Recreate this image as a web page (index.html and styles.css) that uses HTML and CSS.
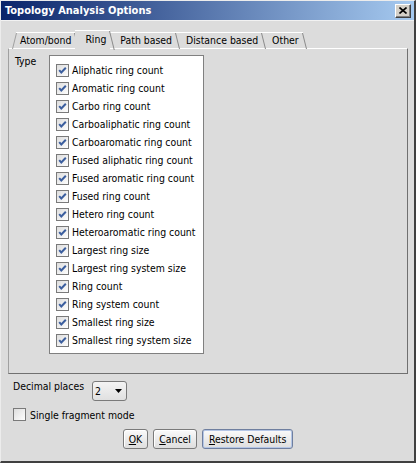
FILE: index.html
```html
<!DOCTYPE html>
<html>
<head>
<meta charset="utf-8">
<link rel="stylesheet" href="styles.css">
</head>
<body>
<svg class="defs" width="0" height="0">
  <defs>
    <linearGradient id="cbg" x1="0" y1="0" x2="1" y2="1">
      <stop offset="0" stop-color="#dcdcdc"/>
      <stop offset="1" stop-color="#ffffff"/>
    </linearGradient>
    <symbol id="cbox" viewBox="0 0 13 13">
      <rect x="0.5" y="0.5" width="12" height="12" fill="url(#cbg)" stroke="#7a7a7a"/>
    </symbol>
    <symbol id="ccheck" viewBox="0 0 13 13">
      <rect x="0.5" y="0.5" width="12" height="12" fill="url(#cbg)" stroke="#7a7a7a"/>
      <path d="M3.2 6.2 L5.3 8.5 L9.8 3.8" fill="none" stroke="#3b5e9e" stroke-width="2"/>
    </symbol>
  </defs>
</svg>
<div class="window">
  <div class="titlebar">
    <span class="title">Topology Analysis Options</span>
    <span class="close">
      <svg width="8" height="7" viewBox="0 0 8 7"><path d="M0.5 0.5 L7.5 6.5 M7.5 0.5 L0.5 6.5" stroke="#000" stroke-width="1.6"/></svg>
    </span>
  </div>
  <div class="content">
    <div class="tabs">
      <div class="tab first">Atom/bond</div>
      <div class="tab selected">Ring</div>
      <div class="tab">Path based</div>
      <div class="tab">Distance based</div>
      <div class="tab">Other</div>
    </div>
    <div class="panel">
      <div class="type-label">Type</div>
      <div class="list">
        <div class="item"><svg class="cb"><use href="#ccheck"/></svg><span>Aliphatic ring count</span></div>
        <div class="item"><svg class="cb"><use href="#ccheck"/></svg><span>Aromatic ring count</span></div>
        <div class="item"><svg class="cb"><use href="#ccheck"/></svg><span>Carbo ring count</span></div>
        <div class="item"><svg class="cb"><use href="#ccheck"/></svg><span>Carboaliphatic ring count</span></div>
        <div class="item"><svg class="cb"><use href="#ccheck"/></svg><span>Carboaromatic ring count</span></div>
        <div class="item"><svg class="cb"><use href="#ccheck"/></svg><span>Fused aliphatic ring count</span></div>
        <div class="item"><svg class="cb"><use href="#ccheck"/></svg><span>Fused aromatic ring count</span></div>
        <div class="item"><svg class="cb"><use href="#ccheck"/></svg><span>Fused ring count</span></div>
        <div class="item"><svg class="cb"><use href="#ccheck"/></svg><span>Hetero ring count</span></div>
        <div class="item"><svg class="cb"><use href="#ccheck"/></svg><span>Heteroaromatic ring count</span></div>
        <div class="item"><svg class="cb"><use href="#ccheck"/></svg><span>Largest ring size</span></div>
        <div class="item"><svg class="cb"><use href="#ccheck"/></svg><span>Largest ring system size</span></div>
        <div class="item"><svg class="cb"><use href="#ccheck"/></svg><span>Ring count</span></div>
        <div class="item"><svg class="cb"><use href="#ccheck"/></svg><span>Ring system count</span></div>
        <div class="item"><svg class="cb"><use href="#ccheck"/></svg><span>Smallest ring size</span></div>
        <div class="item"><svg class="cb"><use href="#ccheck"/></svg><span>Smallest ring system size</span></div>
      </div>
    </div>
    <div class="decimal">
      <span class="decimal-label">Decimal places</span>
      <div class="combo">
        <span class="combo-value">2</span>
        <svg class="combo-arrow" width="7" height="4" viewBox="0 0 7 4"><path d="M0 0 H7 L3.5 4 Z" fill="#000"/></svg>
      </div>
    </div>
    <div class="fragment">
      <svg class="cb"><use href="#cbox"/></svg>
      <span>Single fragment mode</span>
    </div>
    <div class="buttons">
      <button class="btn"><u>O</u>K</button>
      <button class="btn"><u>C</u>ancel</button>
      <button class="btn default"><u>R</u>estore Defaults</button>
    </div>
  </div>
</div>
</body>
</html>
```
FILE: styles.css
```css
body {
  margin: 0;
  font-family: "DejaVu Sans Condensed", "DejaVu Sans", sans-serif;
  font-stretch: condensed;
  font-size: 10.4px;
  color: #000;
}
.defs {
  position: absolute;
  width: 0;
  height: 0;
}
.window {
  width: 416px;
  height: 463px;
  box-sizing: border-box;
  background: #dcdcdc;
  border-style: solid;
  border-width: 1px 2px 2px 1px;
  border-color: #ececec #404040 #404040 #ececec;
  display: flex;
  flex-direction: column;
}
.titlebar {
  height: 19px;
  flex: none;
  display: flex;
  align-items: center;
  justify-content: space-between;
  padding: 0 3px 0 4px;
  background: linear-gradient(to right, #0a246a, #a6caf0);
  color: #fff;
  font-weight: bold;
  font-size: 11px;
}
.close {
  width: 16px;
  height: 14px;
  box-sizing: border-box;
  background: #d4d0c8;
  border-style: solid;
  border-width: 1px;
  border-color: #fff #404040 #404040 #fff;
  box-shadow: inset -1px -1px 0 #808080;
  display: flex;
  align-items: center;
  justify-content: center;
}
.content {
  flex: 1;
  border-top: 1px solid #f2f2f2;
  padding: 9px 6px 0 7px;
  display: flex;
  flex-direction: column;
}
.tabs {
  display: flex;
  align-items: flex-end;
  height: 18px;
  padding-left: 8px;
}
.tab {
  position: relative;
  height: 16px;
  box-sizing: border-box;
  border-top: 1px solid #fff;
  padding: 0 4px 0 10px;
  line-height: 15px;
  white-space: nowrap;
}
.tab::after {
  content: "";
  position: absolute;
  right: 0;
  top: 0;
  width: 1px;
  height: 16px;
  background: #8a8a8a;
  transform: skewX(14deg);
  transform-origin: top left;
}
.tab.first {
  padding-left: 4px;
}
.tab.first::before {
  content: "";
  position: absolute;
  left: 0;
  top: 0;
  width: 1px;
  height: 16px;
  background: #a0a0a0;
  transform: skewX(-14deg);
  transform-origin: top left;
}
.tab.selected {
  height: 19px;
  margin-bottom: -1px;
  z-index: 1;
  background: #dcdcdc;
  line-height: 16px;
}
.tab.selected::after {
  height: 19px;
}
.panel {
  height: 326px;
  box-sizing: border-box;
  border: 1px solid;
  border-color: #fff #707070 #707070 #a0a0a0;
  padding: 6px 0 0 6px;
  display: flex;
  align-items: flex-start;
}
.type-label {
  width: 34px;
  line-height: 13px;
}
.list {
  width: 155px;
  height: 299px;
  box-sizing: border-box;
  border: 1px solid #808080;
  background: #fff;
  padding: 5px 0 0 6px;
}
.item {
  height: 18px;
  display: flex;
  align-items: center;
  gap: 3px;
  white-space: nowrap;
}
.cb {
  width: 13px;
  height: 13px;
  flex: none;
}
.decimal {
  display: flex;
  align-items: flex-start;
  margin-top: 7px;
  padding-left: 5px;
}
.decimal-label {
  width: 79px;
  line-height: 11px;
}
.combo {
  width: 35px;
  height: 20px;
  box-sizing: border-box;
  border: 1px solid #7a7a7a;
  border-radius: 3px;
  background: linear-gradient(#f4f4f4, #e0e0e0);
  display: flex;
  align-items: center;
  justify-content: space-between;
  padding: 0 4px 0 2px;
}
.fragment {
  display: flex;
  align-items: center;
  gap: 4px;
  height: 13px;
  margin-top: 7px;
  padding-left: 5px;
}
.buttons {
  display: flex;
  justify-content: center;
  gap: 5px;
  margin-top: 8px;
}
.btn {
  height: 20px;
  box-sizing: border-box;
  font: inherit;
  color: #000;
  padding: 0 5px;
  border: 1px solid #7a7a7a;
  border-radius: 3px;
  background: linear-gradient(#fafafa, #dedede);
  box-shadow: inset 1px 1px 0 #fff;
  line-height: 16px;
}
.btn.default {
  padding: 0 6px;
  border-color: #6f7f9f;
  box-shadow: inset 0 0 0 1px #b4c6e6;
}
```
